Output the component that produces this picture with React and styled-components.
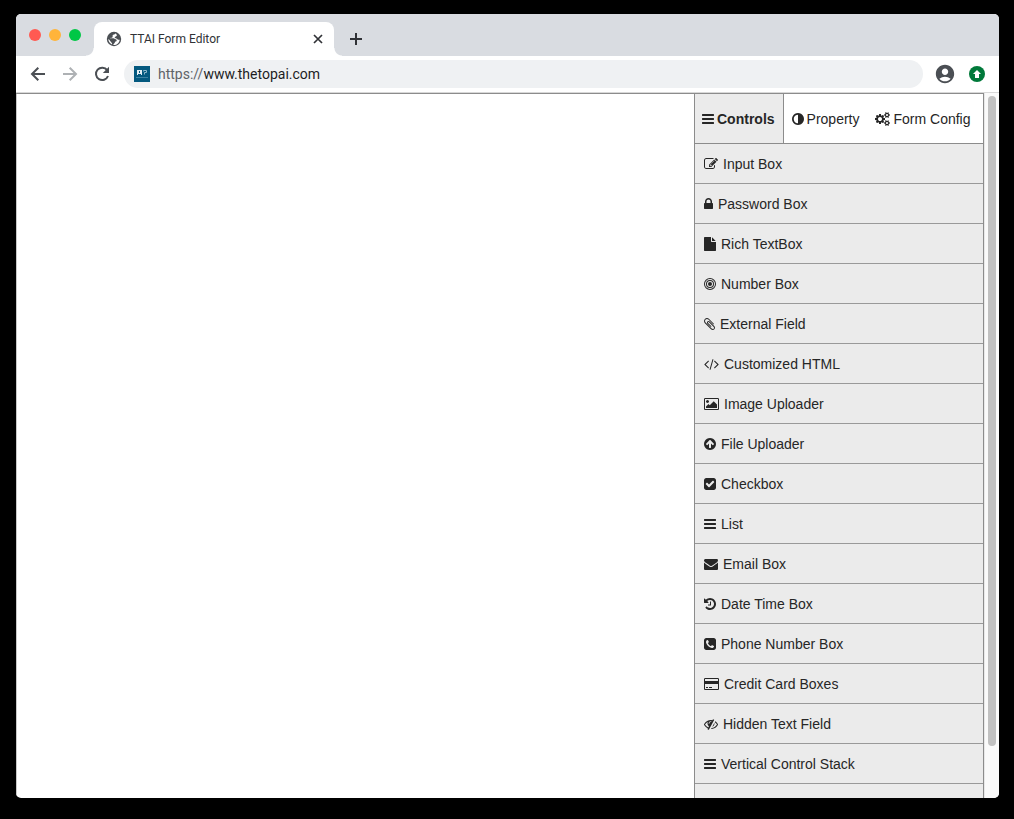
//Import
import React, { useState } from 'react'
import styled, { createGlobalStyle } from 'styled-components'
import { MdAccountCircle } from 'react-icons/md'

const colors = {
    text: '#262626',
    line: '#8c8c8c',
    panel: '#ebebeb',
    chrome: '#d9dce1',
    field: '#eff1f3',
    icon: '#4b4f54',
}

const GlobalStyle = createGlobalStyle`
    * { box-sizing: border-box; }
    body { margin: 0; background: #000; }
    button, input { font: inherit; color: inherit; border: 0; background: none; padding: 0; margin: 0; }
`

// Icon outlines, [width, path]. Every glyph is 1792 units high
const CIRCLE = 'q0 209-103 385.5t-279.5 279.5-385.5 103-385.5-103-279.5-279.5-103-385.5 103-385.5 279.5-279.5 385.5-103 385.5 103 279.5 279.5 103 385.5z'
const SQUARE = 'v960q0 119-84.5 203.5t-203.5 84.5h-960q-119 0-203.5-84.5t-84.5-203.5v-960q0-119 84.5-203.5t203.5-84.5h960q119 0 203.5 84.5t84.5 203.5z'
const SMALL_COG = 'v140q0 16-149 31-12 27-30 52 51 113 51 138 0 4-4 7-122 71-124 71-8 0-46-47t-52-68q-20 2-30 2t-30-2q-14 21-52 68t-46 47q-2 0-124-71-4-3-4-7 0-25 51-138-18-25-30-52-149-15-149-31v-140q0-16 149-31 13-29 30-52-51-113-51-138 0-4 4-7 4-2 35-20t59-34 30-16q8 0 46 46.5t52 67.5q20-2 30-2t30 2q51-71 92-112l6-2q4 0 124 70 4 3 4 7 0 25-51 138 17 23 30 52 149 15 149 31z'

const glyphs = {
    bars: [1536, 'M1664 1344v128q0 26-19 45t-45 19h-1408q-26 0-45-19t-19-45v-128q0-26 19-45t45-19h1408q26 0 45 19t19 45zm0-512v128q0 26-19 45t-45 19h-1408q-26 0-45-19t-19-45v-128q0-26 19-45t45-19h1408q26 0 45 19t19 45zm0-512v128q0 26-19 45t-45 19h-1408q-26 0-45-19t-19-45v-128q0-26 19-45t45-19h1408q26 0 45 19t19 45z'],
    adjust: [1536, 'M896 1440v-1088q-148 0-273 73t-198 198-73 273 73 273 198 198 273 73zm768-544' + CIRCLE],
    cogs: [1920, 'M896 896q0-106-75-181t-181-75-181 75-75 181 75 181 181 75 181-75 75-181zm768 512q0-52-38-90t-90-38-90 38-38 90q0 53 37.5 90.5t90.5 37.5 90.5-37.5 37.5-90.5zm0-1024q0-52-38-90t-90-38-90 38-38 90q0 53 37.5 90.5t90.5 37.5 90.5-37.5 37.5-90.5zm-384 421v185q0 10-7 19.5t-16 10.5l-155 24q-11 35-32 76 34 48 90 115 7 11 7 20 0 12-7 19-23 30-82.5 89.5t-78.5 59.5q-11 0-21-7l-115-90q-37 19-77 31-11 108-23 155-7 24-30 24h-186q-11 0-20-7.5t-10-17.5l-23-153q-34-10-75-31l-118 89q-7 7-20 7-11 0-21-8-144-133-144-160 0-9 7-19 10-14 41-53t47-61q-23-44-35-82l-152-24q-10-1-17-9.5t-7-19.5v-185q0-10 7-19.5t16-10.5l155-24q11-35 32-76-34-48-90-115-7-11-7-20 0-12 7-20 22-30 82-89t79-59q11 0 21 7l115 90q34-18 77-32 11-108 23-154 7-24 30-24h186q11 0 20 7.5t10 17.5l23 153q34 10 75 31l118-89q8-7 20-7 11 0 21 8 144 133 144 160 0 8-7 19-12 16-42 54t-45 60q23 48 34 82l152 23q10 2 17 10.5t7 19.5zm640 533' + SMALL_COG + 'm0-1024' + SMALL_COG],
    edit: [1792, 'M888 1184l116-116-152-152-116 116v56h96v96h56zm440-720q-16-16-33 1l-350 350q-17 17-1 33t33-1l350-350q17-17 1-33zm80 594v190q0 119-84.5 203.5t-203.5 84.5h-832q-119 0-203.5-84.5t-84.5-203.5v-832q0-119 84.5-203.5t203.5-84.5h832q63 0 117 25 15 7 18 23 3 17-9 29l-49 49q-14 14-32 8-23-6-45-6h-832q-66 0-113 47t-47 113v832q0 66 47 113t113 47h832q66 0 113-47t47-113v-126q0-13 9-22l64-64q15-15 35-7t20 29zm-96-738l288 288-672 672h-288v-288zm444 132l-92 92-288-288 92-92q28-28 68-28t68 28l152 152q28 28 28 68t-28 68z'],
    lock: [1152, 'M640 768h512v-192q0-106-75-181t-181-75-181 75-75 181v192zm832 96v576q0 40-28 68t-68 28h-960q-40 0-68-28t-28-68v-576q0-40 28-68t68-28h32v-192q0-184 132-316t316-132 316 132 132 316v192h32q40 0 68 28t28 68z'],
    file: [1536, 'M1152 512v-472q22 14 36 28l408 408q14 14 28 36h-472zm-128 32q0 40 28 68t68 28h544v1056q0 40-28 68t-68 28h-1344q-40 0-68-28t-28-68v-1600q0-40 28-68t68-28h800v544z'],
    bullseye: [1536, 'M1152 896a256 256 0 1 1-512 0 256 256 0 1 1 512 0zM1280 896a384 384 0 1 0-768 0 384 384 0 1 0 768 0zm128 0a512 512 0 1 1-1024 0 512 512 0 1 1 1024 0zm128 0a640 640 0 1 0-1280 0 640 640 0 1 0 1280 0zm128 0a768 768 0 1 1-1536 0 768 768 0 1 1 1536 0z'],
    paperclip: [1408, 'M1596 1385q0 117-79 196t-196 79q-135 0-235-100l-777-776q-113-115-113-271 0-159 110-270t269-111q158 0 273 113l605 606q10 10 10 22 0 16-30.5 46.5t-46.5 30.5q-13 0-23-10l-606-607q-79-77-181-77-106 0-179 75t-73 181q0 105 76 181l776 777q63 63 145 63 64 0 106-42t42-106q0-82-63-145l-581-581q-26-24-60-24-29 0-48 19t-19 48q0 32 25 59l410 410q10 10 10 22 0 16-31 47t-47 31q-12 0-22-10l-410-410q-63-61-63-149 0-82 57-139t139-57q88 0 149 63l581 581q100 98 100 235z'],
    code: [1920, 'M617 1399l-50 50q-10 10-23 10t-23-10l-466-466q-10-10-10-23t10-23l466-466q10-10 23-10t23 10l50 50q10 10 10 23t-10 23l-393 393 393 393q10 10 10 23t-10 23zm591-1067l-373 1291q-4 13-15.5 19.5t-23.5 2.5l-62-17q-13-4-19.5-15.5t-2.5-24.5l373-1291q4-13 15.5-19.5t23.5-2.5l62 17q13 4 19.5 15.5t2.5 24.5zm657 651l-466 466q-10 10-23 10t-23-10l-50-50q-10-10-10-23t10-23l393-393-393-393q-10-10-10-23t10-23l50-50q10-10 23-10t23 10l466 466q10 10 10 23t-10 23z'],
    image: [1920, 'M640 576q0 80-56 136t-136 56-136-56-56-136 56-136 136-56 136 56 56 136zm1024 384v448h-1408v-192l320-320 160 160 512-512zm96-704h-1600q-13 0-22.5 9.5t-9.5 22.5v1216q0 13 9.5 22.5t22.5 9.5h1600q13 0 22.5-9.5t9.5-22.5v-1216q0-13-9.5-22.5t-22.5-9.5zm160 32v1216q0 66-47 113t-113 47h-1600q-66 0-113-47t-47-113v-1216q0-66 47-113t113-47h1600q66 0 113 47t47 113z'],
    upload: [1536, 'M1412 895q0-27-18-45l-362-362-91-91q-18-18-45-18t-45 18l-91 91-362 362q-18 18-18 45t18 45l91 91q18 18 45 18t45-18l189-189v502q0 26 19 45t45 19h128q26 0 45-19t19-45v-502l189 189q19 19 45 19t45-19l91-91q18-18 18-45zm252 1' + CIRCLE],
    check: [1536, 'M813 1299l614-614q19-19 19-45t-19-45l-102-102q-19-19-45-19t-45 19l-467 467-211-211q-19-19-45-19t-45 19l-102 102q-19 19-19 45t19 45l358 358q19 19 45 19t45-19zm851-883' + SQUARE],
    envelope: [1792, 'M1792 710v794q0 66-47 113t-113 47h-1472q-66 0-113-47t-47-113v-794q44 49 101 87 362 246 497 345 57 42 92.5 65.5t94.5 48 110 24.5h2q51 0 110-24.5t94.5-48 92.5-65.5q170-123 498-345 57-39 100-87zm0-294q0 79-49 151t-122 123q-376 261-468 325-10 7-42.5 31t-54 38.5-52 32.5-57.5 27-50 9h-2q-23 0-50-9t-57.5-27-52-32.5-54-38.5-42.5-31q-91-64-262-182.5t-205-142.5q-62-42-117-115.5t-55-136.5q0-78 41.5-130t118.5-52h1472q65 0 112.5 47t47.5 113z'],
    history: [1536, 'M1664 896q0 156-61 298t-164 245-245 164-298 61q-172 0-327-72.5t-264-204.5q-7-10-6.5-22.5t8.5-20.5l137-138q10-9 25-9 16 2 23 12 73 95 179 147t225 52q104 0 198.5-40.5t163.5-109.5 109.5-163.5 40.5-198.5-40.5-198.5-109.5-163.5-163.5-109.5-198.5-40.5q-98 0-188 35.5t-160 101.5l137 138q31 30 14 69-17 40-59 40h-448q-26 0-45-19t-19-45v-448q0-42 40-59 39-17 69 14l130 129q107-101 244.5-156.5t284.5-55.5q156 0 298 61t245 164 164 245 61 298zm-640-288v448q0 14-9 23t-23 9h-320q-14 0-23-9t-9-23v-64q0-14 9-23t23-9h224v-352q0-14 9-23t23-9h64q14 0 23 9t9 23z'],
    phone: [1536, 'M1408 1193q0-11-2-16t-18-16.5-40.5-25-47.5-26.5-45.5-25-28.5-15q-5-3-19-13t-25-15-21-5q-15 0-36.5 20.5t-39.5 45-38.5 45-33.5 20.5q-7 0-16.5-3.5t-15.5-6.5-17-9.5-14-8.5q-99-55-170-126.5t-127-170.5q-2-3-8.5-14t-9.5-17-6.5-15.5-3.5-16.5q0-13 20.5-33.5t45-38.5 45-39.5 20.5-36.5q0-10-5-21t-15-25-13-19q-3-6-15-28.5t-25-45.5-26.5-47.5-25-40.5-16.5-18-16-2q-48 0-101 22-46 21-80 94.5t-34 130.5q0 16 2.5 34t5 30.5 9 33 10 29.5 12.5 33 11 30q60 164 216.5 320.5t320.5 216.5q6 2 30 11t33 12.5 29.5 10 33 9 30.5 5 34 2.5q57 0 130.5-34t94.5-80q22-53 22-101zm256-777' + SQUARE],
    card: [1920, 'M1760 128q66 0 113 47t47 113v1216q0 66-47 113t-113 47h-1600q-66 0-113-47t-47-113v-1216q0-66 47-113t113-47h1600zm-1600 128q-13 0-22.5 9.5t-9.5 22.5v224h1664v-224q0-13-9.5-22.5t-22.5-9.5h-1600zm1600 1280q13 0 22.5-9.5t9.5-22.5v-608h-1664v608q0 13 9.5 22.5t22.5 9.5h1600zm-1504-128v-128h256v128h-256zm384 0v-128h384v128h-384z'],
    hidden: [1792, 'M555 1335l78-141q-87-63-136-159t-49-203q0-121 61-225-229 117-381 353 167 258 427 375zm389-759q0-20-14-34t-34-14q-125 0-214.5 89.5t-89.5 214.5q0 20 14 34t34 14 34-14 14-34q0-86 61-147t147-61q20 0 34-14t14-34zm363-191q0 7-1 9-106 189-316 567t-315 566l-49 89q-10 16-28 16-12 0-134-70-16-10-16-28 0-12 44-87-143-65-263.5-173t-208.5-245q-20-31-20-69t20-69q153-235 380-371t496-136q89 0 180 17l54-97q10-16 28-16 5 0 18 6t31 15.5 33 18.5 31.5 18.5 19.5 11.5q16 10 16 27zm37 447q0 139-79 253.5t-209 164.5l280-502q8 45 8 84zm448 128q0 35-20 69-39 64-109 145-150 172-347.5 267t-419.5 95l74-132q212-18 392.5-137t301.5-307q-115-179-282-294l63-112q95 64 182.5 153t144.5 184q20 34 20 69z'],
}

const Glyph = ({ name }) => {
    const [width, path] = glyphs[name]
    const left = width > 1792 ? 0 : (1792 - width) / 2
    return (
        <svg width={width / 128} height="14" viewBox={`${left} 0 ${width} 1792`} fill="currentColor" aria-hidden="true">
            <path d={path} />
        </svg>
    )
}

// Browser window
const Desktop = styled.div`
    display: flex;
    height: 100vh;
    padding: 14px 15px 21px 16px;
    color: ${colors.text};
    font: 14px/20px "Liberation Sans", Arial, sans-serif;
`

const Window = styled.div`
    flex: 1;
    min-width: 0;
    display: flex;
    flex-direction: column;
    overflow: hidden;
    border-radius: 5px;
    background: #fff;
`

const TabStrip = styled.header`
    display: flex;
    align-items: flex-end;
    height: 42px;
    background: ${colors.chrome};
`

const Lights = styled.div`
    display: flex;
    align-self: center;
    gap: 8px;
    width: 70px;
    padding-left: 13px;
`

const Light = styled.span`
    width: 12px;
    height: 12px;
    border-radius: 50%;
    background: ${p => p.$color};
`

// The tab flares out into the toolbar at both feet
const TabFoot = styled.span`
    width: 8px;
    height: 8px;
    background: radial-gradient(circle at ${p => p.$side} top, transparent 7px, #fff 8px);
`

const BrowserTab = styled.div`
    display: flex;
    align-items: center;
    gap: 8px;
    width: 240px;
    height: 34px;
    padding: 0 8px 0 12px;
    border-radius: 8px 8px 0 0;
    background: #fff;
    color: #303236;
    font: 12px/16px Roboto, sans-serif;

    span { flex: 1; }
    svg { display: block; }
`

const IconButton = styled.button`
    display: flex;
    align-items: center;
    justify-content: center;
    width: ${p => p.$size}px;
    height: ${p => p.$size}px;
    color: ${p => p.$color || colors.icon};
`

const NewTab = styled(IconButton)`
    margin: 0 0 5px 2px;
`

const Toolbar = styled.div`
    display: flex;
    align-items: center;
    gap: 8px;
    height: 37px;
    padding: 0 10px;
    border-bottom: 1px solid #d8d8d8;
`

const Address = styled.label`
    flex: 1;
    display: flex;
    align-items: center;
    height: 28px;
    margin: 0 2px;
    padding-left: 10px;
    border-radius: 14px;
    background: ${colors.field};
    color: #5f6368;
    font: 14px/20px Roboto, sans-serif;

    svg { margin-right: 8px; }
    input { flex: 1; min-width: 0; color: #1c1d1f; outline: 0; }
`

// Page
const Page = styled.main`
    flex: 1;
    min-height: 0;
    display: flex;
`

const Editor = styled.div`
    flex: 1;
    min-width: 0;
    display: flex;
    border: solid ${colors.line};
    border-width: 1px 1px 0 0;
`

const Canvas = styled.section`
    flex: 1;
    border-left: 1px solid #c8c8c8;
`

const Panel = styled.aside`
    width: 289px;
    overflow: hidden;
    border-left: 1px solid ${colors.line};
    background: ${colors.panel};
`

const PanelTabs = styled.div`
    display: flex;
    height: 50px;
    border-bottom: 1px solid ${colors.line};
    background: #fff;
`

const PanelTab = styled.button`
    display: flex;
    align-items: center;
    gap: 3px;
    padding: 0 8px;
    white-space: nowrap;
    border-right: ${p => p.$active ? `1px solid ${colors.line}` : '0'};
    background: ${p => p.$active ? colors.panel : 'none'};
    font-weight: ${p => p.$active ? 'bold' : 'normal'};

    &:first-child { padding-left: 7px; }
`

const ControlList = styled.ul`
    margin: 0;
    padding: 0;
    list-style: none;
`

const ControlItem = styled.button`
    display: flex;
    align-items: center;
    gap: 5px;
    width: 100%;
    height: 40px;
    padding-left: 9px;
    border-bottom: 1px solid #999;
    cursor: grab;
`

const ScrollTrack = styled.div`
    width: 15px;
    padding: 3px;
    border-left: 1px solid #e8e8e8;
    background: #fafafa;
`

const ScrollThumb = styled.div`
    width: 8px;
    height: 93%;
    border-radius: 4px;
    background: #c1c1c1;
`

const tabs = [
    ['bars', 'Controls'],
    ['adjust', 'Property'],
    ['cogs', 'Form Config'],
]

const controls = [
    ['edit', 'Input Box'],
    ['lock', 'Password Box'],
    ['file', 'Rich TextBox'],
    ['bullseye', 'Number Box'],
    ['paperclip', 'External Field'],
    ['code', 'Customized HTML'],
    ['image', 'Image Uploader'],
    ['upload', 'File Uploader'],
    ['check', 'Checkbox'],
    ['bars', 'List'],
    ['envelope', 'Email Box'],
    ['history', 'Date Time Box'],
    ['phone', 'Phone Number Box'],
    ['card', 'Credit Card Boxes'],
    ['hidden', 'Hidden Text Field'],
    ['bars', 'Vertical Control Stack'],
]

const Globe = () => (
    <svg width="16" height="16" viewBox="0 0 16 16" aria-hidden="true">
        <circle cx="8" cy="8" r="7.2" fill={colors.icon} />
        <path fill="#fff" d="M9.300 2.400C8.900 3.600 7.200 3.300 6.700 4.300c-.4.900.4 1.500-.4 2.100-.8.600-1.900.2-2.600.8h3.800c1 0 1.300.9 2.200 1.100.9.200 1.300.9.800 1.700-.5.700-1.300.5-1.500 1.300-.2.700-.9 1.100-1.300 1.700-.3.500-.4.800-.3 1.100 3.400.2 6.100-2.300 6.300-5.400-1.300.5-2.100-.2-2.800-.9-.7-.6-2-.3-2.200-1.200-.1-.9 1.300-.9 1.900-1.500.6-.7.2-2.100-1.300-2.700zM2.300 8c0 2.600 1.600 4.600 3.800 5.400.3-.9-.3-1.500-.9-2.100C4.300 10.400 4 9 2.300 8z" />
    </svg>
)

const SiteIcon = () => (
    <svg width="16" height="16" viewBox="0 0 16 16" aria-hidden="true">
        <path fill="#04597f" d="M0 0h16v16H0z" />
        <path fill="#e4eef3" d="M3 4h5v5H3z" />
        <path fill="#04597f" d="M5 5h1v2H5zM4 8h3v1H4z" />
        <path fill="none" stroke="#8fb8cb" d="M9.500 5.500v-1h3v2h-2v2" />
        <path fill="#3d83a3" d="M2 11h12v1H2z" />
    </svg>
)

// Browser button icons, drawn as lines
const LineIcon = ({ size = 16, children }) => (
    <svg width={size} height={size} viewBox="0 0 16 16" fill="none" stroke="currentColor" strokeWidth="2" aria-hidden="true">
        {children}
    </svg>
)

const App = () => {
    const [active, setActive] = useState('Controls')
    const [url, setUrl] = useState('www.thetopai.com')

    return (
        <Desktop>
            <GlobalStyle />
            <Window>
                <TabStrip>
                    <Lights>
                        <Light $color="#ff5a52" />
                        <Light $color="#ffb43a" />
                        <Light $color="#00c746" />
                    </Lights>
                    <TabFoot $side="left" />
                    <BrowserTab>
                        <Globe />
                        <span>TTAI Form Editor</span>
                        <IconButton $size={16} $color="#303236" aria-label="Close tab">
                            <LineIcon><path strokeWidth="1.7" d="M4 4l8 8M12 4l-8 8" /></LineIcon>
                        </IconButton>
                    </BrowserTab>
                    <TabFoot $side="right" />
                    <NewTab $size={24} $color="#303236" aria-label="New tab">
                        <svg width="12" height="12" viewBox="0 0 12 12" fill="currentColor">
                            <path d="M5 0h2v5h5v2H7v5H5V7H0V5h5z" />
                        </svg>
                    </NewTab>
                </TabStrip>

                <Toolbar>
                    <IconButton $size={24} aria-label="Back">
                        <LineIcon><path d="M15 8H2.500M8.300 1.700L2 8l6.300 6.300" /></LineIcon>
                    </IconButton>
                    <IconButton $size={24} $color="#aeb1b4" aria-label="Forward">
                        <LineIcon><path d="M1 8h12.500M7.700 1.700L14 8l-6.300 6.300" /></LineIcon>
                    </IconButton>
                    <IconButton $size={24} aria-label="Reload">
                        <LineIcon>
                            <path d="M13.200 4.200A6.200 6.200 0 1 0 14 10" />
                            <path fill="currentColor" stroke="none" d="M15 .8V7H8.800z" />
                        </LineIcon>
                    </IconButton>
                    <Address>
                        <SiteIcon />
                        https://
                        <input aria-label="Address" value={url} onChange={e => setUrl(e.target.value)} />
                    </Address>
                    <IconButton $size={24} aria-label="Account"><MdAccountCircle size={22} /></IconButton>
                    <IconButton $size={24} aria-label="Update">
                        <svg width="16" height="16" viewBox="0 0 16 16">
                            <circle cx="8" cy="8" r="8" fill="#00793a" />
                            <path fill="#fff" d="M8 4l4 4h-2v4H6V8H4z" />
                        </svg>
                    </IconButton>
                </Toolbar>

                <Page>
                    <Editor>
                        <Canvas />
                        <Panel>
                            <PanelTabs role="tablist">
                                {tabs.map(([icon, label]) => (
                                    <PanelTab
                                        key={label}
                                        role="tab"
                                        aria-selected={active === label}
                                        $active={active === label}
                                        onClick={() => setActive(label)}
                                    >
                                        <Glyph name={icon} />
                                        {label}
                                    </PanelTab>
                                ))}
                            </PanelTabs>
                            <ControlList>
                                {controls.map(([icon, label]) => (
                                    <li key={label}>
                                        <ControlItem>
                                            <Glyph name={icon} />
                                            {label}
                                        </ControlItem>
                                    </li>
                                ))}
                            </ControlList>
                        </Panel>
                    </Editor>
                    <ScrollTrack>
                        <ScrollThumb />
                    </ScrollTrack>
                </Page>
            </Window>
        </Desktop>
    )
}

export default App
